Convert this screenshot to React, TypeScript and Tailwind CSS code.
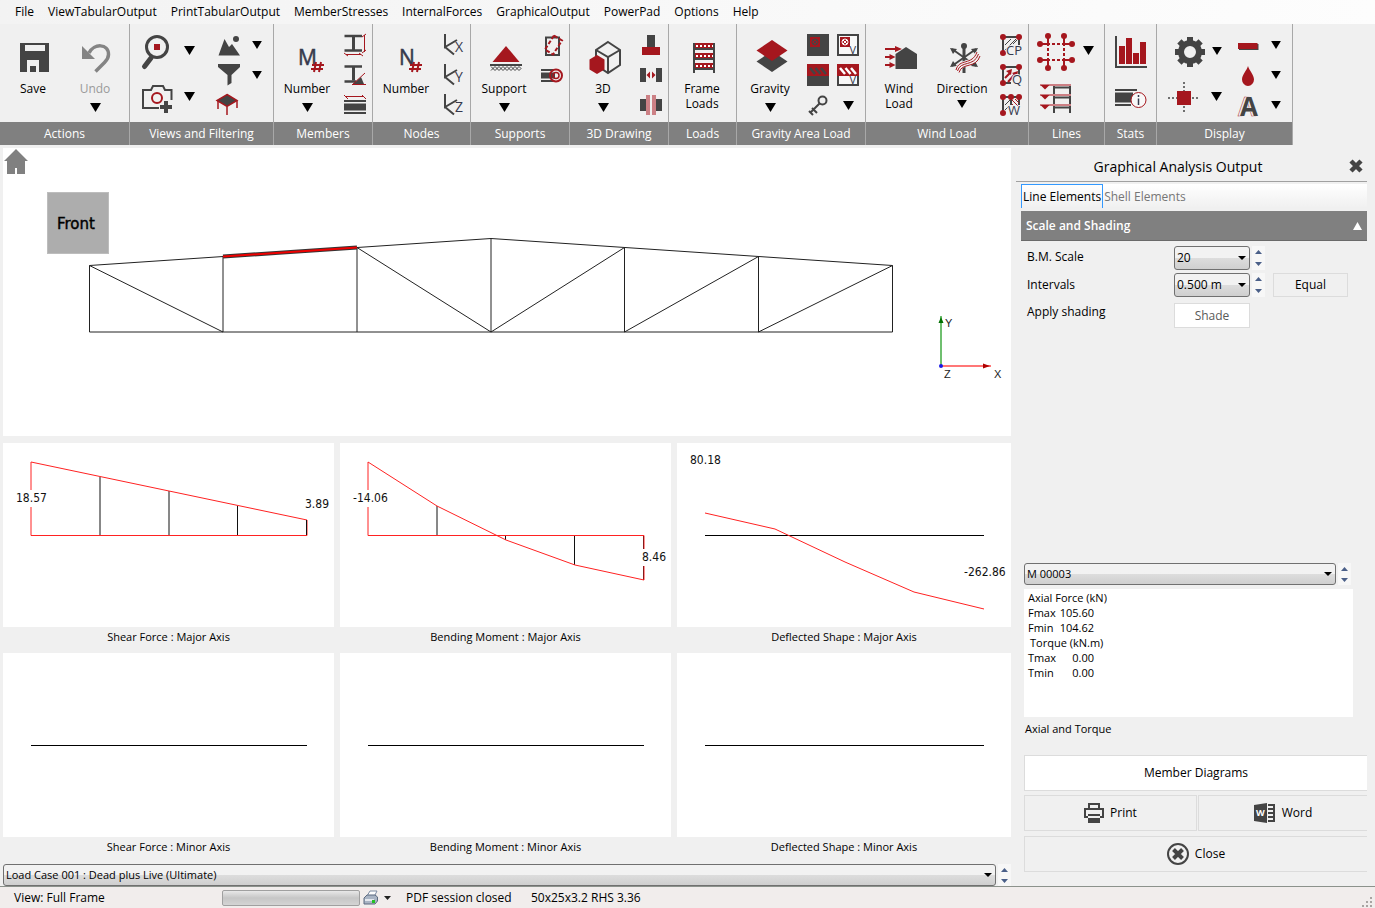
import React, { useState } from 'react';

const DARK = '#444444';
const RED = '#a5171e';
const INK = '#36394d';
const BG = '#f0f0f0';

interface IconProps {
    box: string;
    w: number;
    h: number;
    children: React.ReactNode;
}

const Icon: React.FC<IconProps> = ({ box, w, h, children }) => (
    <svg viewBox={box} width={w} height={h} fill="none" aria-hidden="true" className="shrink-0 overflow-visible">
        {children}
    </svg>
);

const Arrow: React.FC<{ small?: boolean }> = ({ small }) => (
    <svg viewBox="0 0 11 9" width={small ? 10 : 11} height={small ? 8 : 9} aria-hidden="true" className="shrink-0">
        <path d="M0 0h11L5.5 9z" fill="#000" />
    </svg>
);

const DropButton: React.FC<{ label: string; small?: boolean; className?: string }> = ({ label, small, className }) => (
    <button aria-label={label} className={`flex items-center justify-center ${className ?? ''}`}>
        <Arrow small={small} />
    </button>
);

const IconButton: React.FC<{ label: string; className?: string; children: React.ReactNode }> = ({ label, className, children }) => (
    <button aria-label={label} title={label} className={`flex items-center justify-center ${className ?? ''}`}>
        {children}
    </button>
);

interface BigToolProps {
    lines: string[];
    box: string;
    width?: string;
    arrow?: boolean;
    disabled?: boolean;
    children: React.ReactNode;
}

const BigTool: React.FC<BigToolProps> = ({ lines, box, width = 'w-[66px]', arrow, disabled, children }) => (
    <button disabled={disabled} className={`${width} h-full shrink-0 flex flex-col items-center pt-4`}>
        <Icon box={box} w={40} h={34}>{children}</Icon>
        <span className={`mt-[7px] flex flex-col leading-[15px] ${disabled ? 'text-[#9a9a9a]' : ''}`}>
            {lines.map(line => <span key={line}>{line}</span>)}
        </span>
        {arrow && <span className="mt-[7px]"><Arrow /></span>}
    </button>
);

const Triple: React.FC<{ className?: string; children: React.ReactNode }> = ({ className = 'w-[30px]', children }) => (
    <div className={`${className} shrink-0 grid auto-rows-[30px] pt-[6px]`}>{children}</div>
);

const Pair: React.FC<{ className: string; children: React.ReactNode }> = ({ className, children }) => (
    <div className={`${className} shrink-0 grid grid-rows-[48px_46px] pt-1`}>{children}</div>
);

const PairArrows: React.FC<{ className: string; children: React.ReactNode }> = ({ className, children }) => (
    <div className={`${className} shrink-0 grid grid-rows-[45px_47px] pt-1`}>{children}</div>
);

const Group: React.FC<{ title: string; width: string; children: React.ReactNode }> = ({ title, width, children }) => (
    <section className={`${width} shrink-0 flex flex-col border-r border-[#a8a8a8]`}>
        <div className="h-[98px] flex">{children}</div>
        <h2 className="h-[23px] bg-[#808080] text-white text-center leading-[23px]">{title}</h2>
    </section>
);

const Hash: React.FC<{ x: number }> = ({ x }) => (
    <path d={`M${x + 5} 62l-2 10M${x + 10} 62l-2 10M${x + 1} 65h12M${x} 69h12`} stroke={RED} strokeWidth="2" />
);

const NodeAxis: React.FC<{ letter: string }> = ({ letter }) => (
    <IconButton label={`Node ${letter}`}>
        <Icon box="443 33 22 22" w={22} h={22}>
            <path d="M445 33v13l12-7M445 46l9 7.5" stroke={DARK} strokeWidth="2" />
            <text x="455" y="51" fontSize="14" fill={INK}>{letter}</text>
        </Icon>
    </IconButton>
);

const Ribbon: React.FC = () => (
    <div className="flex bg-[#f0f0f0] text-center overflow-hidden">
        <Group title="Actions" width="w-[130px]">
            <BigTool lines={['Save']} box="13 40 40 34" width="w-[66px]">
                <path d="M20 43h29v29H39V60H27V72h-7z" fill={DARK} />
                <path d="M25 45h20v6H25z" fill={BG} />
                <path d="M30 66h6v6h-6z" fill={DARK} />
            </BigTool>
            <BigTool lines={['Undo']} box="76 40 40 34" width="w-[58px]" arrow disabled>
                <path d="M83 46v13h13z" fill="#848484" />
                <path d="M90 53C95 43 109.5 43.5 109.5 54.5C109.5 58.5 107.5 60.5 105.5 62.5L96.5 71.5" stroke="#848484" strokeWidth="3.5" />
            </BigTool>
        </Group>

        <Group title="Views and Filtering" width="w-[144px]">
            <Pair className="w-[44px] ml-[5px]">
                <IconButton label="Zoom">
                    <Icon box="141 34 34 36" w={34} h={36}>
                        <circle cx="158" cy="47" r="10.5" stroke={DARK} strokeWidth="3" />
                        <path d="M152 58l-6.5 8.5" stroke={DARK} strokeWidth="5" strokeLinecap="round" />
                        <path d="M155 44h6v6h-6z" fill={RED} />
                    </Icon>
                </IconButton>
                <IconButton label="Snapshot">
                    <Icon box="140 84 34 32" w={34} h={32}>
                        <path d="M159 109h-16V91h8l2-4h10l2 4h6.5v10" stroke={DARK} strokeWidth="2" />
                        <circle cx="157" cy="99" r="5" stroke={RED} strokeWidth="2" />
                        <path d="M160 108h12M166 102v12" stroke={DARK} strokeWidth="4" />
                    </Icon>
                </IconButton>
            </Pair>
            <PairArrows className="w-[21px]">
                <DropButton label="Zoom options" />
                <DropButton label="Snapshot options" />
            </PairArrows>
            <Triple className="w-[30px] ml-[14px]">
                <IconButton label="Scenery">
                    <Icon box="218 34 22 22" w={22} h={22}>
                        <path d="M218.5 55.5L224.5 39l4.5 8l3-3l8 11.5z" fill={DARK} />
                        <circle cx="236" cy="39" r="3" fill={DARK} />
                    </Icon>
                </IconButton>
                <IconButton label="Filter">
                    <Icon box="218 65 22 22" w={22} h={22}>
                        <path d="M218 65h22v3l-8.5 8v8l-4 2.5V76L218 68z" fill={DARK} />
                    </Icon>
                </IconButton>
                <IconButton label="Table view">
                    <Icon box="218 94 22 22" w={22} h={22}>
                        <path d="M227 94.5l10 6l-10 6l-10-6z" fill={DARK} stroke={RED} strokeWidth="1.5" />
                        <path d="M218 101v8M227 107v8M237 101v7" stroke={RED} strokeWidth="1.5" />
                    </Icon>
                </IconButton>
            </Triple>
            <Triple className="w-[26px]">
                <DropButton label="Scenery options" small />
                <DropButton label="Filter options" small />
            </Triple>
        </Group>

        <Group title="Members" width="w-[99px]">
            <BigTool lines={['Number']} box="287 40 40 34" arrow>
                <text x="298" y="65" fontSize="21" fill={INK} stroke={INK} strokeWidth="0.5">M</text>
                <Hash x={311} />
            </BigTool>
            <Triple>
                <IconButton label="Section size">
                    <Icon box="344 33 22 22" w={22} h={22}>
                        <path d="M344.5 35H362M344.5 49.5H362" stroke={DARK} strokeWidth="2.5" />
                        <path d="M353.5 35v14" stroke={DARK} strokeWidth="3" />
                        <path d="M364.5 34v17M362 36l4-3M362 52l4-3M346 53.5h15M344 52l4 3M359 52l4 3" stroke={RED} strokeWidth="1" />
                    </Icon>
                </IconButton>
                <IconButton label="Section angle">
                    <Icon box="344 62 22 22" w={22} h={22}>
                        <path d="M344.5 64.5H362M344.5 79.5H356" stroke={DARK} strokeWidth="2.5" />
                        <path d="M353.5 64.5v14" stroke={DARK} strokeWidth="3" />
                        <path d="M353 82l8-7l3 7z" fill={DARK} />
                        <path d="M352 83l13-12M352 82.5h14" stroke={RED} strokeWidth="1" />
                    </Icon>
                </IconButton>
                <IconButton label="Member length">
                    <Icon box="344 93 22 22" w={22} h={22}>
                        <path d="M344 100h22M344 112h22" stroke={DARK} strokeWidth="2" />
                        <path d="M344 102.5h22v7h-22z" fill={DARK} />
                        <path d="M346 95.5h18M344 94l4 4M362 94l4 4" stroke={RED} strokeWidth="1" />
                    </Icon>
                </IconButton>
            </Triple>
        </Group>

        <Group title="Nodes" width="w-[98px]">
            <BigTool lines={['Number']} box="386 40 40 34">
                <text x="399" y="65" fontSize="21" fill={INK} stroke={INK} strokeWidth="0.5">N</text>
                <Hash x={409} />
            </BigTool>
            <Triple>
                <NodeAxis letter="X" />
                <NodeAxis letter="Y" />
                <NodeAxis letter="Z" />
            </Triple>
        </Group>

        <Group title="Supports" width="w-[99px]">
            <BigTool lines={['Support']} box="484 40 40 34" arrow>
                <path d="M506 46l13.5 16h-27z" fill={RED} />
                <path d="M490 65h32" stroke={DARK} strokeWidth="2" />
                <path d="M491 66.5l4 4l4-4l4 4l4-4l4 4l4-4l4 4l2-2M491 70.5l4-4l4 4l4-4l4 4l4-4l4 4l4-4l2 2" stroke={DARK} strokeWidth="1" />
            </BigTool>
            <Triple>
                <IconButton label="Support rotation">
                    <Icon box="541 33 22 22" w={22} h={22}>
                        <path d="M546 36.5h13V54h-13z" stroke={DARK} strokeWidth="2" />
                        <path d="M554 34.5l8 5l-9 14l-8-5z" stroke={RED} strokeWidth="2" strokeDasharray="4 2" />
                    </Icon>
                </IconButton>
                <IconButton label="Pinned end">
                    <Icon box="541 64 22 22" w={22} h={22}>
                        <path d="M541 70h12M541 81h12" stroke={DARK} strokeWidth="2" />
                        <path d="M541 72.5h14v6h-14z" fill={DARK} />
                        <circle cx="556" cy="75.5" r="6" stroke={RED} strokeWidth="2" />
                        <circle cx="556" cy="75.5" r="3" stroke={RED} strokeWidth="1.5" />
                    </Icon>
                </IconButton>
            </Triple>
        </Group>

        <Group title="3D Drawing" width="w-[99px]">
            <BigTool lines={['3D']} box="583 40 40 34" arrow>
                <path d="M608 42l12 8v15l-12 8l-12-8V50zM596 50l12 7l12-7M608 57v16" stroke={DARK} strokeWidth="2" />
                <path d="M597 55l7.5 4.5v10L597 74l-7.5-4.5v-10z" fill={RED} />
            </BigTool>
            <Triple>
                <IconButton label="Base plate">
                    <Icon box="640 33 22 22" w={22} h={22}>
                        <path d="M647 34h8v12h-8z" fill={DARK} />
                        <path d="M642 46h18v8h-18z" fill={RED} />
                    </Icon>
                </IconButton>
                <IconButton label="Member gap">
                    <Icon box="640 63 22 22" w={22} h={22}>
                        <path d="M640 67h6v14h-6zM656 67h6v14h-6z" fill={DARK} />
                        <path d="M646.5 74l3.5-3.5v7zM655.5 74l-3.5-3.5v7z" fill={RED} />
                    </Icon>
                </IconButton>
                <IconButton label="End plates">
                    <Icon box="640 93 22 22" w={22} h={22}>
                        <path d="M640 98h6v12h-6zM656 98h6v12h-6z" fill={DARK} />
                        <path d="M646 94h4v20h-4zM652 94h4v20h-4z" fill="#cc8085" />
                    </Icon>
                </IconButton>
            </Triple>
        </Group>

        <Group title="Loads" width="w-[68px]">
            <BigTool lines={['Frame', 'Loads']} box="682 40 40 34">
                <path d="M693 43h22v5h-22zM693 53h22v5h-22zM693 63h22v5h-22z" fill={RED} />
                <path d="M696 46h17M696 56h17M696 66h17" stroke="#fff" strokeWidth="2" strokeDasharray="2 2" />
                <path d="M694 43v30M714 43v30M694 49h20M694 59h20M694 69h20" stroke={DARK} strokeWidth="2" />
            </BigTool>
        </Group>

        <Group title="Gravity Area Load" width="w-[129px]">
            <BigTool lines={['Gravity']} box="750 40 40 34" arrow>
                <path d="M772 51l15.5 10.5L772 72l-15.5-10.5z" fill={DARK} />
                <path d="M772 40l15.5 10.5L772 61l-15.5-10.5z" fill={RED} />
            </BigTool>
            <Triple>
                <IconButton label="Area load opening">
                    <Icon box="807 33 22 22" w={22} h={22}>
                        <path d="M807 33h22v22h-22z" fill={DARK} />
                        <path d="M810 36h10v10h-10z" fill={RED} />
                        <circle cx="815" cy="41" r="3" stroke={DARK} />
                        <path d="M813 39l4 4M817 39l-4 4" stroke={DARK} />
                    </Icon>
                </IconButton>
                <IconButton label="Area load strip">
                    <Icon box="807 63 22 22" w={22} h={22}>
                        <path d="M807 63h22v22h-22z" fill={DARK} />
                        <path d="M807 63h22v12h-22z" fill={RED} />
                        <path d="M810 67l5 6M815.5 67l5 6M821 67l5 6" stroke={DARK} strokeWidth="2.5" />
                    </Icon>
                </IconButton>
                <IconButton label="Key">
                    <Icon box="807 94 22 22" w={22} h={22}>
                        <circle cx="822.5" cy="100.5" r="4" stroke={DARK} strokeWidth="2" />
                        <path d="M819.5 103.5L810 113M812 108l5 5M809 111l4 4" stroke={DARK} strokeWidth="2" />
                    </Icon>
                </IconButton>
            </Triple>
            <Triple>
                <IconButton label="View area load opening">
                    <Icon box="837 33 22 22" w={22} h={22}>
                        <path d="M838 34h20v20h-20z" fill="#f8f8f8" stroke={DARK} strokeWidth="2" />
                        <path d="M840 36h10v10h-10z" fill={RED} />
                        <circle cx="845" cy="41" r="3" stroke="#fff" />
                        <path d="M843 39l4 4M847 39l-4 4" stroke="#fff" />
                        <text x="849.5" y="53" fontSize="11" fill={INK}>V</text>
                    </Icon>
                </IconButton>
                <IconButton label="View area load strip">
                    <Icon box="837 63 22 22" w={22} h={22}>
                        <path d="M838 64h20v20h-20z" fill="#f8f8f8" stroke={DARK} strokeWidth="2" />
                        <path d="M837 63h22v12h-22z" fill={RED} />
                        <path d="M840 67l5 6M845.5 67l5 6M851 67l5 6" stroke="#fff" strokeWidth="2.5" />
                        <text x="849.5" y="83" fontSize="11" fill={INK}>V</text>
                    </Icon>
                </IconButton>
                <DropButton label="Key options" />
            </Triple>
        </Group>

        <Group title="Wind Load" width="w-[163px]">
            <BigTool lines={['Wind', 'Load']} box="879 40 40 34">
                <path d="M906 47l11 7v15h-21.5V54z" fill={DARK} />
                <path d="M885 49h13M885 57h8M885 65h8" stroke={RED} strokeWidth="2" />
                <path d="M895 46l7 3l-7 3zM889.5 54l6 3l-6 3zM889.5 62l6 3l-6 3z" fill={RED} />
            </BigTool>
            <button className="w-[60px] h-full shrink-0 flex flex-col items-center pt-4">
                <Icon box="942 40 40 34" w={40} h={34}>
                    <path d="M964 46v27" stroke={DARK} strokeWidth="3" />
                    <path d="M952 49l24 17M976 49l-24 17" stroke={DARK} strokeWidth="2" />
                    <circle cx="964" cy="46" r="3" fill={DARK} />
                    <path d="M950 48l7 1l-4 5zM978 48l-7 1l4 5zM950 67l7-1l-4-5zM978 67l-7-1l4-5z" fill={DARK} />
                    <path d="M957 71C960 60 974 67 978 53" stroke="#f0f0f0" strokeWidth="6" />
                    <path d="M956 70C959 58 972 66 977 52M957.5 71C960.5 60 974 67.5 978.5 54M959 72.5C962 62 976 69 980 56" stroke={RED} strokeWidth="1" />
                </Icon>
                <span className="mt-[7px] leading-[15px]">Direction</span>
                <span className="mt-1"><Arrow small /></span>
            </button>
            <Triple className="w-[30px] ml-1">
                <IconButton label="Pressure coefficients">
                    <Icon box="1000 33 22 22" w={22} h={22}>
                        <path d="M1003 52V36h16v8" stroke={DARK} strokeWidth="2" />
                        <path d="M1005 44l6-6M1005 49l11-11M1013 43l4-4" stroke={DARK} />
                        <circle cx="1003" cy="36" r="3" fill={RED} />
                        <circle cx="1019" cy="36" r="3" fill={RED} />
                        <circle cx="1003" cy="52" r="3" fill={RED} />
                        <text x="1006" y="54" fontSize="13" fill={INK} stroke={BG} strokeWidth="2" paintOrder="stroke">CP</text>
                    </Icon>
                </IconButton>
                <IconButton label="Dynamic pressure">
                    <Icon box="1000 63 22 22" w={22} h={22}>
                        <path d="M1003 82V66h16v8M1003 82h8" stroke={DARK} strokeWidth="2" />
                        <path d="M1005 77l5-5M1008 81l7-8" stroke={RED} strokeWidth="2" />
                        <path d="M1006 70l6-2l-1 6zM1012 72l6-2l-1 6z" fill={RED} />
                        <circle cx="1003" cy="66" r="3" fill={RED} />
                        <circle cx="1019" cy="66" r="3" fill={RED} />
                        <circle cx="1003" cy="82" r="3" fill={RED} />
                        <text x="1012" y="83" fontSize="13" fill={INK} stroke={BG} strokeWidth="2" paintOrder="stroke">Q</text>
                    </Icon>
                </IconButton>
                <IconButton label="Wind area">
                    <Icon box="1000 93 22 22" w={22} h={22}>
                        <path d="M1003 112V96h16v8M1011 96v8" stroke={DARK} strokeWidth="2" />
                        <path d="M1005 104l5-5M1005 109l6-6" stroke={DARK} />
                        <path d="M1012 99l6 6M1012 103l3 3M1015 98l4 4" stroke={RED} />
                        <circle cx="1003" cy="96" r="3" fill={RED} />
                        <circle cx="1011" cy="96" r="3" fill={RED} />
                        <circle cx="1019" cy="96" r="3" fill={RED} />
                        <circle cx="1003" cy="112" r="3" fill={RED} />
                        <text x="1008" y="114" fontSize="13" fill={INK} stroke={BG} strokeWidth="2" paintOrder="stroke">W</text>
                    </Icon>
                </IconButton>
            </Triple>
        </Group>

        <Group title="Lines" width="w-[76px]">
            <Pair className="w-[53px]">
                <IconButton label="Grid lines">
                    <Icon box="1037 33 38 38" w={38} h={38}>
                        <path d="M1048 36v32M1064 36v32M1040 44h32M1040 60h32" stroke={RED} strokeWidth="2" strokeDasharray="10 2 3 2 3 2 10" />
                        {[[1048, 36], [1064, 36], [1040, 44], [1072, 44], [1040, 60], [1072, 60], [1048, 68], [1064, 68]].map(([x, y]) => (
                            <circle key={`${x}-${y}`} cx={x} cy={y} r="3" fill={RED} />
                        ))}
                    </Icon>
                </IconButton>
                <IconButton label="Levels">
                    <Icon box="1040 84 32 30" w={32} h={30}>
                        <path d="M1054 86v27M1070 86v27M1054 87.5h16M1054 97.5h16M1054 107.5h16" stroke={DARK} strokeWidth="2" />
                        <path d="M1040 85h31M1040 95h31M1040 105h31" stroke="#cc8085" strokeWidth="2" />
                        <path d="M1040.5 85h9l-4.5 4.5zM1040.5 95h9l-4.5 4.5zM1040.5 105h9l-4.5 4.5z" fill={RED} />
                    </Icon>
                </IconButton>
            </Pair>
            <PairArrows className="w-3">
                <DropButton label="Grid options" />
            </PairArrows>
        </Group>

        <Group title="Stats" width="w-[52px]">
            <Pair className="w-[51px]">
                <IconButton label="Chart">
                    <Icon box="1116 36 32 32" w={32} h={32}>
                        <path d="M1117 36v31h31" stroke={DARK} strokeWidth="2" />
                        <path d="M1120 46h6v18h-6zM1127 38h6v26h-6zM1134 53h6v11h-6zM1141 42h6v22h-6z" fill={RED} />
                    </Icon>
                </IconButton>
                <IconButton label="Member information">
                    <Icon box="1116 84 32 30" w={32} h={30}>
                        <path d="M1116 90h22M1116 105h16" stroke={DARK} strokeWidth="2" />
                        <path d="M1116 92.5h18v10h-18z" fill={DARK} />
                        <circle cx="1139.5" cy="100" r="7.5" fill="#f8f8f8" stroke={RED} />
                        <path d="M1139.5 95v2M1139.5 98.5v6.5" stroke={INK} strokeWidth="1.5" />
                    </Icon>
                </IconButton>
            </Pair>
        </Group>

        <Group title="Display" width="w-[136px]">
            <Pair className="w-[53px]">
                <IconButton label="Settings">
                    <Icon box="1168 36 32 32" w={32} h={32}>
                        <circle cx="1190" cy="52" r="9" stroke={DARK} strokeWidth="6" />
                        {[0, 45, 90, 135].map(angle => (
                            <path key={angle} d="M1187 37h6v5h-6zM1187 62h6v5h-6z" fill={DARK} transform={`rotate(${angle} 1190 52)`} />
                        ))}
                    </Icon>
                </IconButton>
                <IconButton label="Node symbol">
                    <Icon box="1168 83 32 32" w={32} h={32}>
                        <path d="M1184 82v32M1168 98h32" stroke={DARK} strokeWidth="1.5" strokeDasharray="2 2" />
                        <path d="M1177 91h14v14h-14z" fill={RED} />
                    </Icon>
                </IconButton>
            </Pair>
            <PairArrows className="w-[13px]">
                <DropButton label="Settings options" small />
                <DropButton label="Node symbol options" />
            </PairArrows>
            <Triple className="w-[30px] ml-[10px]">
                <IconButton label="Line style">
                    <Icon box="1237 34 22 22" w={22} h={22}>
                        <path d="M1239 44h19.5v6H1239z" fill={DARK} />
                        <path d="M1238 43h19.5v6H1238z" fill={RED} />
                    </Icon>
                </IconButton>
                <IconButton label="Colour">
                    <Icon box="1237 64 22 22" w={22} h={22}>
                        <path d="M1248 66c1 4 6 9 6 13.5a6 6.5 0 0 1-12 0c0-4.5 5-9.5 6-13.5z" fill={RED} />
                    </Icon>
                </IconButton>
                <IconButton label="Font">
                    <Icon box="1237 94 22 22" w={22} h={22}>
                        <text x="1238" y="116" fontSize="26" fontWeight="700" fill={BG} stroke={RED} strokeWidth="0.5">A</text>
                        <text x="1240" y="116" fontSize="26" fontWeight="700" fill={DARK} stroke={BG} strokeWidth="1" paintOrder="stroke">A</text>
                    </Icon>
                </IconButton>
            </Triple>
            <Triple className="w-[26px]">
                <DropButton label="Line style options" small />
                <DropButton label="Colour options" small />
                <DropButton label="Font options" small />
            </Triple>
        </Group>
    </div>
);

interface ComboProps {
    label: string;
    id: string;
    options: string[];
    className?: string;
}

const Combo: React.FC<ComboProps> = ({ label, id, options, className }) => (
    <div className={`relative ${className ?? ''}`}>
        <select
            id={id}
            aria-label={label}
            className="w-full h-full appearance-none pl-[2px] pr-4 border border-[#707070] rounded-[3px] bg-linear-to-b from-[#f2f2f2] from-50% via-[#dddddd] via-50% to-[#cfcfcf]"
        >
            {options.map(option => <option key={option}>{option}</option>)}
        </select>
        <svg viewBox="0 0 8 4" width="8" height="4" aria-hidden="true" className="absolute right-1 top-1/2 -translate-y-1/2 pointer-events-none">
            <path d="M0 0h8L4 4z" fill="#000" />
        </svg>
    </div>
);

const Spinner: React.FC<{ label: string }> = ({ label }) => (
    <div className="w-[13px] shrink-0 flex flex-col bg-[#f7f7f7]">
        <button aria-label={`${label} up`} className="flex-1 flex items-center justify-center">
            <svg viewBox="0 0 7 4" width="7" height="4" aria-hidden="true"><path d="M0 4h7L3.5 0z" fill="#4a5f88" /></svg>
        </button>
        <button aria-label={`${label} down`} className="flex-1 flex items-center justify-center">
            <svg viewBox="0 0 7 4" width="7" height="4" aria-hidden="true"><path d="M0 0h7L3.5 4z" fill="#4a5f88" /></svg>
        </button>
    </div>
);

const FrameView: React.FC = () => (
    <svg viewBox="3 148 1008 288" className="block w-full h-auto bg-white" fill="none" role="img" aria-label="Frame view">
        <path d="M16 149l12 12h-3v13h-8v-6h-2v6H7v-13H4z" fill="#808080" />
        <rect x="47.5" y="192.5" width="61" height="61" fill="#adadad" stroke="#bdbdbd" />
        <text x="57" y="229" fontSize="15" fill="#000" stroke="#000" strokeWidth="0.4" className="font-['DejaVu_Sans',sans-serif]">Front</text>
        <g stroke="#222" strokeWidth="1">
            <path d="M89.5 265.5L491 238.5L892.5 265.5V332H89.5z" />
            <path d="M223 257v75M357 248v84M491 238.5v93.5M624.5 248v84M758.5 257v75" />
            <path d="M89.5 265.5L223 332M357 247.5L491 332L624.5 247.5M624.5 332L758.5 256.5M758.5 332L892.5 265.5" />
        </g>
        <path d="M223 256.5L357 247.5" stroke="#333" strokeWidth="4" />
        <path d="M223 256.5L357 247.5" stroke="#f00000" strokeWidth="2" />
        <path d="M941 366v-50" stroke="#6fbf6f" strokeWidth="2" />
        <path d="M941 317l2.5 6h-5z" fill="#007000" />
        <path d="M941 366h50" stroke="#ff7777" strokeWidth="2" />
        <path d="M990 366l-7-2.5v5z" fill="#b00000" />
        <circle cx="941" cy="366" r="2" fill="#1a1ae6" />
        <g fontSize="11" fill="#222" className="font-['Liberation_Sans',sans-serif]">
            <text x="945" y="327">Y</text>
            <text x="994" y="378">X</text>
            <text x="944" y="378">Z</text>
        </g>
    </svg>
);

interface DiagramProps {
    title: string;
    box: string;
    children: React.ReactNode;
}

const Diagram: React.FC<DiagramProps> = ({ title, box, children }) => (
    <figure>
        <svg viewBox={box} className="block w-full h-auto bg-white" fill="none" role="img" aria-label={title}>
            {children}
        </svg>
        <figcaption className="h-[26px] pt-[2px] text-center text-[11px] leading-4">{title}</figcaption>
    </figure>
);

const Value: React.FC<{ x: number; y: number; children: string }> = ({ x, y, children }) => (
    <text x={x} y={y} fontSize="12" fill="#111" className="font-['DejaVu_Sans_Condensed','DejaVu_Sans',sans-serif]">{children}</text>
);

const OutputPanel: React.FC = () => {
    const [tab, setTab] = useState('line');

    return (
        <aside className="w-[351px] shrink-0 flex flex-col pb-[14px]">
            <div className="h-[37px] pt-[6px] flex items-center border-b border-[#a0a0a0]">
                <h2 className="flex-1 pl-[13px] text-center text-[14px] font-medium">Graphical Analysis Output</h2>
                <button aria-label="Close panel" className="ml-[22px] mr-1">
                    <svg viewBox="0 0 14 14" width="14" height="14" aria-hidden="true"><path d="M2 2l10 10M12 2L2 12" stroke={DARK} strokeWidth="4.5" /></svg>
                </button>
            </div>
            <div className="ml-[5px] flex flex-col">
                <div role="tablist" className="mt-[2px] h-6 flex bg-linear-to-b from-white to-[#f0f0f0]">
                    <button
                        role="tab"
                        aria-selected={tab === 'line'}
                        onClick={() => setTab('line')}
                        className={`px-px whitespace-nowrap border border-b-0 ${tab === 'line' ? 'border-[#3399ff]' : 'border-transparent text-[#767676]'}`}
                    >
                        Line Elements
                    </button>
                    <button
                        role="tab"
                        aria-selected={tab === 'shell'}
                        onClick={() => setTab('shell')}
                        className={`whitespace-nowrap border border-b-0 ${tab === 'shell' ? 'border-[#3399ff]' : 'border-transparent text-[#767676]'}`}
                    >
                        Shell Elements
                    </button>
                </div>
                <button className="mt-[3px] h-[30px] px-[5px] flex items-center justify-between bg-[#808080] text-white font-semibold border-b border-[#6a6a6a]">
                    Scale and Shading
                    <svg viewBox="0 0 9 8" width="9" height="8" aria-hidden="true"><path d="M0 8h9L4.5 0z" fill="#fff" /></svg>
                </button>
                <div className="mt-[5px] ml-[6px] grid grid-cols-[147px_1fr] gap-y-[3px]">
                    <label htmlFor="bm-scale" className="leading-[22px]">B.M. Scale</label>
                    <div className="h-6 flex gap-[2px]">
                        <Combo id="bm-scale" label="B.M. Scale" options={['20', '10', '50']} className="w-[76px]" />
                        <Spinner label="B.M. Scale" />
                    </div>
                    <label htmlFor="intervals" className="leading-6">Intervals</label>
                    <div className="h-6 flex gap-[2px]">
                        <Combo id="intervals" label="Intervals" options={['0.500 m', '1.000 m']} className="w-[76px]" />
                        <Spinner label="Intervals" />
                        <button className="ml-[6px] w-[75px] border border-[#dcdcdc]">Equal</button>
                    </div>
                    <span className="leading-6">Apply shading</span>
                    <button className="mt-[3px] w-[76px] h-[25px] bg-white border border-[#dcdcdc] text-[#5a5a5a]">Shade</button>
                </div>
            </div>

            <div className="ml-2 mt-auto pt-6 flex flex-col">
                <div className="h-[22px] mr-4 flex gap-[2px] text-[11px]">
                    <Combo id="member" label="Member" options={['M 00003', 'M 00004']} className="flex-1" />
                    <Spinner label="Member" />
                </div>
                <div className="mt-1 mr-[14px] h-[128px] bg-white px-1 pt-px text-[11px] leading-[15px]">
                    <p>Axial Force (kN)</p>
                    <dl className="grid grid-cols-[30px_36px]">
                        <dt>Fmax</dt><dd className="text-right">105.60</dd>
                        <dt>Fmin</dt><dd className="text-right">104.62</dd>
                    </dl>
                    <p className="pl-[2px]">Torque (kN.m)</p>
                    <dl className="grid grid-cols-[30px_36px]">
                        <dt>Tmax</dt><dd className="text-right">0.00</dd>
                        <dt>Tmin</dt><dd className="text-right">0.00</dd>
                    </dl>
                </div>
                <p className="mt-1 h-[34px] pl-px text-[11px] leading-4">Axial and Torque</p>
                <button className="h-9 bg-white border border-r-0 border-[#dcdcdc]">Member Diagrams</button>
                <div className="mt-1 h-9 flex gap-px">
                    <button className="w-[173px] flex items-center justify-center gap-[6px] border border-[#dcdcdc]">
                        <svg viewBox="0 0 20 20" width="20" height="20" fill="none" aria-hidden="true">
                            <path d="M5 5V1h10v4M4 14H1V6h18v8h-3" stroke={DARK} strokeWidth="2" />
                            <path d="M4 11h12v2H4zM4 15h12v5H4z" fill={DARK} />
                        </svg>
                        Print
                    </button>
                    <button className="flex-1 flex items-center justify-center gap-[7px] border border-r-0 border-[#dcdcdc]">
                        <svg viewBox="0 0 21 20" width="21" height="20" fill="none" aria-hidden="true">
                            <path d="M0 2l13-2v20L0 18z" fill={DARK} />
                            <path d="M14 2h6v16h-6M14 6h5M14 10h5M14 14h5" stroke={DARK} strokeWidth="2" />
                            <text x="2" y="13" fontSize="9" fontWeight="700" fill="#fff">W</text>
                        </svg>
                        Word
                    </button>
                </div>
                <button className="mt-[5px] h-9 flex items-center justify-center gap-[6px] border border-r-0 border-[#dcdcdc]">
                    <svg viewBox="0 0 22 22" width="22" height="22" fill="none" aria-hidden="true">
                        <circle cx="11" cy="11" r="10" stroke={DARK} strokeWidth="2" />
                        <path d="M6.5 6.5l9 9M15.5 6.5l-9 9" stroke={DARK} strokeWidth="4" />
                    </svg>
                    Close
                </button>
            </div>
        </aside>
    );
};

const StatusBar: React.FC = () => (
    <footer className="h-[22px] shrink-0 flex items-center border-t border-[#8c928c] bg-[#f1edec]">
        <span className="w-[222px] pl-[14px]">View: Full Frame</span>
        <div role="progressbar" aria-label="Progress" className="w-[138px] h-4 border border-[#a0a0a0] rounded-[2px] bg-linear-to-b from-[#e8e8e8] via-[#c6c6c6] to-[#d4d4d4]" />
        <button aria-label="Print options" className="ml-[3px] w-[43px] flex items-center gap-[6px]">
            <svg viewBox="0 0 15 15" width="15" height="15" fill="none" aria-hidden="true">
                <path d="M4 6l3-5h7l-3 6z" fill="#fff" stroke="#7d8ca3" />
                <path d="M1 8l3-3h8l2.5 2v4L12 14H1z" fill="#a9b4c4" stroke="#5d6b80" />
                <path d="M2 9h9v2H2z" fill="#e4e8ee" />
                <path d="M9 10h3v3H9z" fill="#22c322" />
            </svg>
            <svg viewBox="0 0 7 4" width="7" height="4" aria-hidden="true"><path d="M0 0h7L3.5 4z" fill="#222" /></svg>
        </button>
        <span className="w-[125px] whitespace-nowrap">PDF session closed</span>
        <span className="flex-1">50x25x3.2 RHS 3.36</span>
        <svg viewBox="0 0 11 11" width="11" height="11" aria-hidden="true" className="mr-[2px] self-end">
            <path d="M8 0h2v2H8zM4 4h2v2H4zM8 4h2v2H8zM0 8h2v2H0zM4 8h2v2H4zM8 8h2v2H8z" fill="#a8a4a2" />
        </svg>
    </footer>
);

const menuItems = ['File', 'ViewTabularOutput', 'PrintTabularOutput', 'MemberStresses', 'InternalForces', 'GraphicalOutput', 'PowerPad', 'Options', 'Help'];

const App: React.FC = () => (
    <div className="min-h-screen flex flex-col bg-[#f0f0f0] text-[12px] text-black font-['Open_Sans','Noto_Sans',sans-serif]">
        <nav className="h-6 shrink-0 flex items-center gap-[14px] pl-[15px] bg-linear-to-r from-[#f3f3f3] to-[#fdfdfd]">
            {menuItems.map(item => <button key={item}>{item}</button>)}
        </nav>
        <Ribbon />
        <div className="flex-1 flex gap-[5px] pl-[3px] pr-2">
            <main className="flex-1 min-w-0 pt-[3px] flex flex-col">
                <FrameView />
                <div className="mt-[7px] grid grid-cols-[331fr_331fr_334fr] gap-x-[6px]">
                    <Diagram title="Shear Force : Major Axis" box="3 443 331 184">
                        <path d="M100 477v58M169 491v44M237.5 506v29M306.5 520v15" stroke="#111" />
                        <path d="M31 490V462L307 520V535.5H31V507" stroke="#f22" />
                        <path d="M306.5 520v15" stroke="#111" />
                        <Value x={16} y={502}>18.57</Value>
                        <Value x={305} y={508}>3.89</Value>
                    </Diagram>
                    <Diagram title="Bending Moment : Major Axis" box="340 443 331 184">
                        <path d="M437 506v29M505.5 535v5M574.5 535v30M643.5 535v14M643.5 566v14" stroke="#111" />
                        <path d="M368 490V462L437 506L506 540L575 565L644 580V566M368 507v28.5H644V549" stroke="#f22" />
                        <Value x={353} y={502}>-14.06</Value>
                        <Value x={642} y={561}>8.46</Value>
                    </Diagram>
                    <Diagram title="Deflected Shape : Major Axis" box="677 443 334 184">
                        <path d="M705 535.5H984" stroke="#000" />
                        <path d="M705 513L775 529L845 562L914 592L984 609" stroke="#f22" />
                        <Value x={690} y={464}>80.18</Value>
                        <Value x={964} y={576}>-262.86</Value>
                    </Diagram>
                    <Diagram title="Shear Force : Minor Axis" box="3 653 331 184">
                        <path d="M31 745.5H307" stroke="#000" />
                    </Diagram>
                    <Diagram title="Bending Moment : Minor Axis" box="340 653 331 184">
                        <path d="M368 745.5H644" stroke="#000" />
                    </Diagram>
                    <Diagram title="Deflected Shape : Minor Axis" box="677 653 334 184">
                        <path d="M705 745.5H984" stroke="#000" />
                    </Diagram>
                </div>
                <div className="mt-px h-[22px] flex gap-[2px] text-[11px]">
                    <Combo id="load-case" label="Load case" options={['Load Case 001 : Dead plus Live (Ultimate)']} className="flex-1" />
                    <Spinner label="Load case" />
                </div>
            </main>
            <OutputPanel />
        </div>
        <StatusBar />
    </div>
);

export default App;
